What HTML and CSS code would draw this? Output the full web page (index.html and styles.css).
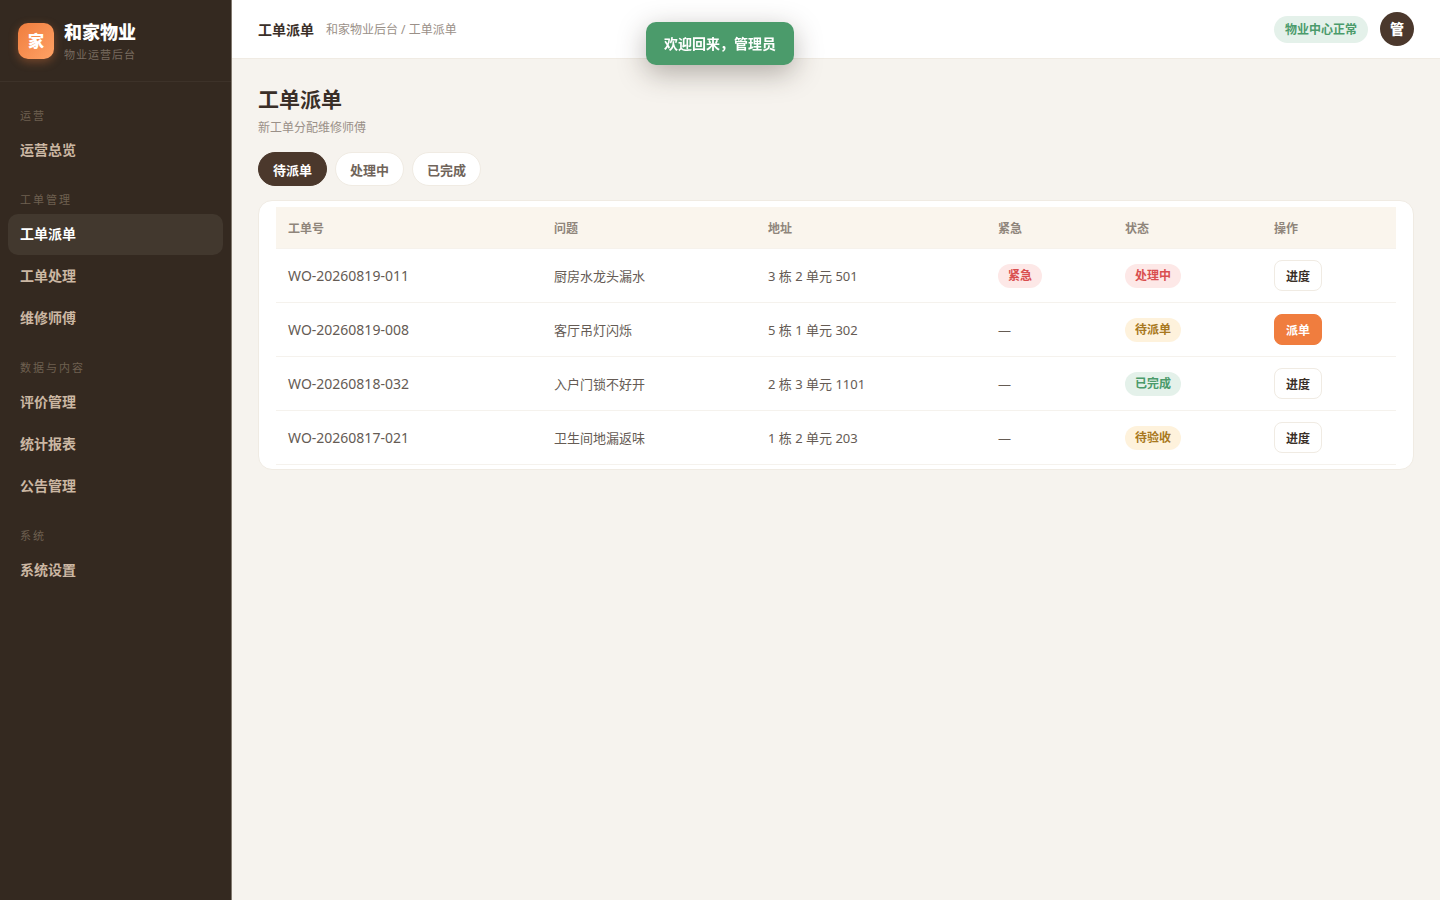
FILE: index.html
```html
<!DOCTYPE html>
<html lang="zh-CN">
<head>
    <meta charset="UTF-8">
    <meta name="viewport" content="width=device-width, initial-scale=1.0">
    <title>工单派单 - 和家物业</title>
    <link rel="stylesheet" href="styles.css">
</head>
<body>
    <aside class="sidebar">
        <div class="brand">
            <div class="logo">家</div>
            <div>
                <div class="brand-name">和家物业</div>
                <div class="brand-sub">物业运营后台</div>
            </div>
        </div>
        <nav class="nav">
            <div class="nav-label">运营</div>
            <a href="#">运营总览</a>
            <div class="nav-label">工单管理</div>
            <a href="#" class="active">工单派单</a>
            <a href="#">工单处理</a>
            <a href="#">维修师傅</a>
            <div class="nav-label">数据与内容</div>
            <a href="#">评价管理</a>
            <a href="#">统计报表</a>
            <a href="#">公告管理</a>
            <div class="nav-label">系统</div>
            <a href="#">系统设置</a>
        </nav>
    </aside>

    <div class="main">
        <header class="topbar">
            <span class="topbar-title">工单派单</span>
            <span class="crumb">和家物业后台 / 工单派单</span>
            <span class="status">物业中心正常</span>
            <div class="avatar">管</div>
        </header>

        <main class="content">
            <h1>工单派单</h1>
            <p class="desc">新工单分配维修师傅</p>

            <div class="tabs">
                <button type="button" class="tab active">待派单</button>
                <button type="button" class="tab">处理中</button>
                <button type="button" class="tab">已完成</button>
            </div>

            <div class="card">
                <table>
                    <colgroup>
                        <col class="col-no">
                        <col class="col-issue">
                        <col class="col-addr">
                        <col class="col-urgent">
                        <col class="col-status">
                        <col class="col-action">
                    </colgroup>
                    <thead>
                        <tr>
                            <th>工单号</th>
                            <th>问题</th>
                            <th>地址</th>
                            <th>紧急</th>
                            <th>状态</th>
                            <th>操作</th>
                        </tr>
                    </thead>
                    <tbody>
                        <tr>
                            <td class="order-no">WO-20260819-011</td>
                            <td>厨房水龙头漏水</td>
                            <td>3 栋 2 单元 501</td>
                            <td><span class="badge red">紧急</span></td>
                            <td><span class="badge red">处理中</span></td>
                            <td><button type="button" class="btn">进度</button></td>
                        </tr>
                        <tr>
                            <td class="order-no">WO-20260819-008</td>
                            <td>客厅吊灯闪烁</td>
                            <td>5 栋 1 单元 302</td>
                            <td>—</td>
                            <td><span class="badge yellow">待派单</span></td>
                            <td><button type="button" class="btn primary">派单</button></td>
                        </tr>
                        <tr>
                            <td class="order-no">WO-20260818-032</td>
                            <td>入户门锁不好开</td>
                            <td>2 栋 3 单元 1101</td>
                            <td>—</td>
                            <td><span class="badge green">已完成</span></td>
                            <td><button type="button" class="btn">进度</button></td>
                        </tr>
                        <tr>
                            <td class="order-no">WO-20260817-021</td>
                            <td>卫生间地漏返味</td>
                            <td>1 栋 2 单元 203</td>
                            <td>—</td>
                            <td><span class="badge yellow">待验收</span></td>
                            <td><button type="button" class="btn">进度</button></td>
                        </tr>
                    </tbody>
                </table>
            </div>
        </main>
    </div>

    <div class="toast" role="status">欢迎回来，管理员</div>
</body>
</html>
```
FILE: styles.css
```css
* {
    box-sizing: border-box;
}

body {
    margin: 0;
    min-height: 100vh;
    display: flex;
    background: #f6f3ee;
    color: #3a2f28;
    font-family: "Noto Sans", "Noto Sans CJK SC", sans-serif;
    font-size: 13px;
}

button {
    font-family: inherit;
    cursor: pointer;
}

/* sidebar */
.sidebar {
    width: 232px;
    flex-shrink: 0;
    background: #342920;
    border-right: 1px solid #81796f;
}

.brand {
    display: flex;
    align-items: center;
    gap: 10px;
    height: 82px;
    padding: 0 18px;
    border-bottom: 1px solid #3d3229;
}

.logo {
    width: 36px;
    height: 36px;
    border-radius: 10px;
    background: linear-gradient(135deg, #f07d3e, #ffa265);
    box-shadow: 0 3px 10px rgba(240, 125, 62, 0.35);
    color: #fff;
    font-size: 16px;
    font-weight: 800;
    line-height: 36px;
    text-align: center;
}

.brand-name {
    padding-top: 4px;
    color: #fff;
    font-size: 18px;
    font-weight: 800;
    line-height: 24px;
}

.brand-sub {
    color: #786b5f;
    font-size: 11px;
    letter-spacing: 1px;
    line-height: 22px;
}

.nav {
    padding: 8px;
}

.nav-label {
    padding: 16px 12px 4px;
    color: #6e6050;
    font-size: 11px;
    letter-spacing: 2px;
    line-height: 20px;
}

.nav a {
    display: block;
    height: 41px;
    margin-bottom: 1px;
    padding: 0 12px;
    border-radius: 10px;
    color: #cbb7a3;
    font-size: 14px;
    font-weight: 600;
    line-height: 40px;
    text-decoration: none;
}

.nav a + .nav-label {
    padding-top: 18px;
}

.nav a.active {
    background: #42382e;
    color: #fff;
    font-weight: 700;
}

/* topbar */
.main {
    flex: 1;
    min-width: 0;
}

.topbar {
    display: flex;
    align-items: center;
    gap: 12px;
    height: 59px;
    padding: 0 26px;
    background: #fff;
    border-bottom: 1px solid #f0ebe3;
}

.topbar-title {
    font-size: 14px;
    font-weight: 700;
}

.crumb {
    color: #9a9088;
    font-size: 12px;
}

.status {
    margin-left: auto;
    padding: 0 11px;
    border-radius: 14px;
    background: #e4f1ea;
    color: #4b9b6b;
    font-size: 12px;
    font-weight: 600;
    line-height: 27px;
}

.avatar {
    width: 34px;
    height: 34px;
    border-radius: 50%;
    background: #4b382c;
    color: #fff;
    font-size: 14px;
    font-weight: 800;
    line-height: 34px;
    text-align: center;
}

/* content */
.content {
    padding: 25px 26px;
}

h1 {
    margin: 0;
    font-size: 21px;
    font-weight: 700;
    line-height: 30px;
}

.desc {
    margin: 4px 0 14px;
    color: #9a9088;
    font-size: 12px;
    line-height: 20px;
}

.tabs {
    display: flex;
    gap: 8px;
    margin-bottom: 14px;
}

.tab {
    height: 34px;
    padding: 0 14px;
    border: 1px solid #f0ebe3;
    border-radius: 17px;
    background: #fff;
    color: #70645a;
    font-size: 13px;
    font-weight: 600;
}

.tab.active {
    background: #4b382c;
    border-color: #4b382c;
    color: #fff;
}

.card {
    padding: 6px 17px 4px;
    border: 1px solid #f0ebe3;
    border-radius: 14px;
    background: #fff;
}

table {
    width: 100%;
    table-layout: fixed;
    border-collapse: separate;
    border-spacing: 0;
}

.col-no { width: 266px; }
.col-issue { width: 214px; }
.col-addr { width: 230px; }
.col-urgent { width: 127px; }
.col-status { width: 149px; }
.col-action { width: 134px; }

th {
    height: 42px;
    padding: 0 12px;
    background: #faf5ed;
    border-bottom: 1px solid #f6f2ec;
    color: #8f857b;
    font-size: 12px;
    font-weight: 600;
    text-align: left;
}

td {
    height: 54px;
    padding: 0 12px;
    border-bottom: 1px solid #f5f2ed;
    color: #655b54;
    font-size: 13px;
}

.order-no {
    font-size: 14px;
}

.badge {
    display: inline-block;
    padding: 0 10px;
    border-radius: 12px;
    font-size: 12px;
    font-weight: 600;
    line-height: 24px;
}

.badge.red {
    background: #fde8e7;
    color: #d94f4f;
}

.badge.yellow {
    background: #fef2dc;
    color: #a87820;
}

.badge.green {
    background: #e4f1ea;
    color: #4b9b6b;
}

.btn {
    height: 31px;
    padding: 0 11px;
    border: 1px solid #f0ebe3;
    border-radius: 8px;
    background: #fff;
    color: #3a2f28;
    font-size: 12px;
    font-weight: 600;
}

.btn.primary {
    background: #f07d3e;
    border-color: #f07d3e;
    color: #fff;
}

/* toast */
.toast {
    position: fixed;
    top: 22px;
    left: 50%;
    transform: translateX(-50%);
    padding: 0 18px;
    border-radius: 10px;
    background: #4b9b6b;
    box-shadow: 0 8px 28px rgba(52, 41, 32, 0.35);
    color: #fff;
    font-size: 14px;
    font-weight: 600;
    line-height: 43px;
    white-space: nowrap;
}
```
